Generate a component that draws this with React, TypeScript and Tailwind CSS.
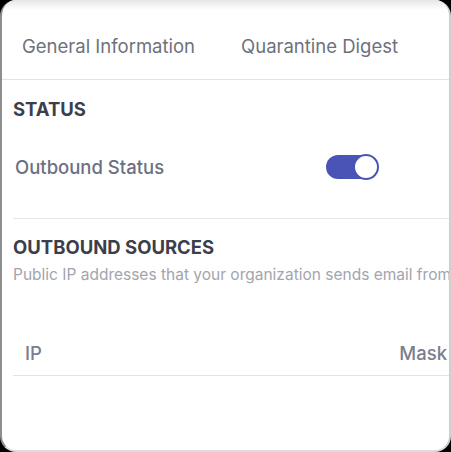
export default function App() {
  return (
    <div className="h-[452px] w-[451px] bg-black" style={{ fontFamily: "Inter, 'Noto Sans', sans-serif" }}>
      <div className="relative h-full w-full overflow-hidden rounded-[16px] border-b-2 border-l-2 border-r-2 border-b-[#dcdcdc] border-l-[#8e8e8e] border-r-[#cfcfcf] bg-white">
        <div className="h-[10px] bg-gradient-to-b from-[#e6e6e8] to-white" />
        <div className="flex h-[70px] items-center border-b border-[#e3e3e6] pt-[4px] text-[18.5px] text-[#6e717c]">
          <span className="ml-[20px]">General Information</span>
          <span className="ml-[46px]">Quarantine Digest</span>
        </div>

        <div className="pl-[11px]">
          <div className="mt-[17px] h-[24px] text-[18.5px] font-bold leading-[24px] text-[#3c3f4b]">STATUS</div>
          <div className="mt-[34px] flex h-[24px] items-center">
            <span className="ml-[2px] w-[311px] text-[18.5px] font-medium leading-[24px] text-[#6c7081]">Outbound Status</span>
            <div className="relative h-[24px] w-[52px] rounded-full bg-[#4a54b7]">
              <div className="absolute right-[-1px] top-[-1px] h-[26px] w-[26px] rounded-full border-2 border-[#4a54b7] bg-white" />
            </div>
          </div>
          <div className="mt-[39px] border-t border-[#e6e6e9]" />

          <div className="mt-[16px] h-[24px] text-[18.5px] font-bold leading-[24px] text-[#3c3f4b]">OUTBOUND SOURCES</div>
          <div className="mt-[6px] h-[20px] overflow-hidden whitespace-nowrap text-[15.5px] leading-[20px] text-[#a2a5ad]">
            Public IP addresses that your organization sends email from
          </div>

          <div className="mt-[56px] flex h-[24px] items-center justify-between pl-[12px] text-[18.5px] font-medium leading-[24px] text-[#7a7e8d]">
            <span>IP</span>
            <span className="mr-[2px]">Mask</span>
          </div>
          <div className="mt-[10px] border-t border-[#e3e3e6]" />
        </div>
      </div>
    </div>
  );
}
